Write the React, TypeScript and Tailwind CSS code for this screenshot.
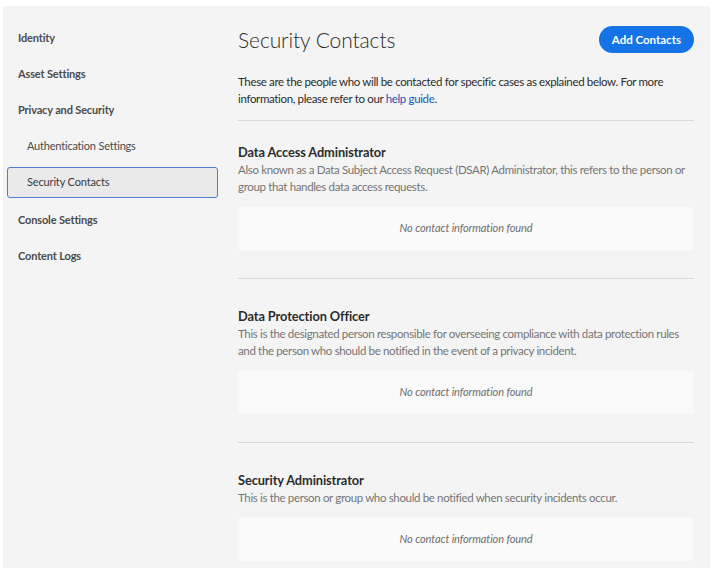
import React from "react";

const navItems = [
    { label: "Identity", kind: "top" },
    { label: "Asset Settings", kind: "top" },
    { label: "Privacy and Security", kind: "top" },
    { label: "Authentication Settings", kind: "sub" },
    { label: "Security Contacts", kind: "active" },
    { label: "Console Settings", kind: "top" },
    { label: "Content Logs", kind: "top" },
];

const roles = [
    {
        title: "Data Access Administrator",
        text: "Also known as a Data Subject Access Request (DSAR) Administrator, this refers to the person or group that handles data access requests.",
    },
    {
        title: "Data Protection Officer",
        text: "This is the designated person responsible for overseeing compliance with data protection rules and the person who should be notified in the event of a privacy incident.",
    },
    {
        title: "Security Administrator",
        text: "This is the person or group who should be notified when security incidents occur.",
    },
];

function Sidebar() {
    return (
        <nav className="w-[231px] shrink-0 pl-[4px] pt-[17px] flex flex-col gap-[5px]">
            {navItems.map((item) => {
                if (item.kind === "active") {
                    return (
                        <div
                            key={item.label}
                            className="h-[31px] w-[211px] mb-[2px] flex items-center pl-[19px] rounded-[3px] border border-[#4a7fd0] bg-[#eaeaea] text-[11px] tracking-[-0.15px] text-[#3a3a3a]"
                        >
                            {item.label}
                        </div>
                    );
                }
                return (
                    <div
                        key={item.label}
                        className={
                            item.kind === "sub"
                                ? "h-[31px] flex items-center pl-[20px] text-[11px] tracking-[-0.2px] text-[#4b4b4b]"
                                : "h-[31px] flex items-center pl-[11px] text-[11px] tracking-[-0.15px] font-bold text-[#4b4b4b]"
                        }
                    >
                        {item.label}
                    </div>
                );
            })}
        </nav>
    );
}

function RoleSection({ title, text, index, last }: { title: string; text: string; index: number; last: boolean }) {
    const top = index === 0 ? "pt-[22px]" : "pt-[28px]";
    return (
        <section className={last ? top : `${top} pb-[28px] border-b border-[#d8d8d8]`}>
            <h2 className="text-[12.8px] font-bold text-[#2c2c2c] leading-[18px] tracking-[-0.1px]">{title}</h2>
            <p className="text-[11.5px] tracking-[-0.35px] text-[#747474] leading-[17px]">{text}</p>
            <div className="mt-[12px] h-[43px] rounded-[3px] bg-[#fafafa] flex items-center justify-center text-[11px] tracking-[-0.1px] italic text-[#6e6e6e]">
                No contact information found
            </div>
        </section>
    );
}

export default function App() {
    return (
        <div className="w-[713px] h-[571px] bg-white pt-[6px] pl-[3px] pr-[3px] pb-[3px]" style={{ fontFamily: "Lato, 'Open Sans', sans-serif" }}>
            <div className="h-full bg-[#f4f4f4] flex overflow-hidden">
                <Sidebar />
                <main className="flex-1 pl-[4px] pr-[16px] pt-[18px]">
                    <div className="flex items-center justify-between">
                        <h1 className="text-[21px] font-light text-[#2c2c2c] tracking-[-0.1px]">Security Contacts</h1>
                        <button className="h-[27px] px-[13px] rounded-full bg-[#1473e6] text-white text-[11.5px] font-bold">
                            Add Contacts
                        </button>
                    </div>
                    <p className="mt-[17px] text-[11.5px] tracking-[-0.35px] leading-[17px] text-[#2c2c2c] pb-[13px] border-b border-[#d8d8d8]">
                        These are the people who will be contacted for specific cases as explained below. For more information, please refer to our{" "}
                        <a className="text-[#1a56b3]">help guide</a>.
                    </p>
                    {roles.map((r, i) => (
                        <RoleSection key={r.title} title={r.title} text={r.text} index={i} last={i === roles.length - 1} />
                    ))}
                </main>
            </div>
        </div>
    );
}
